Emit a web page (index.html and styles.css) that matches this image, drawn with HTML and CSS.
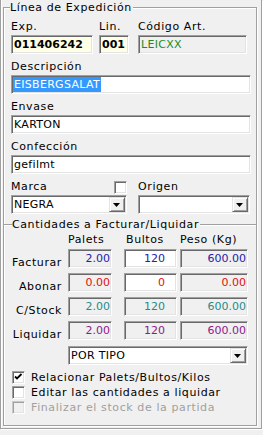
FILE: index.html
```html
<!DOCTYPE html>
<html>
<head>
<meta charset="utf-8">
<link rel="stylesheet" href="styles.css">
</head>
<body>
<div class="panel">
  <fieldset class="grp main">
    <legend>Línea de Expedición</legend>
    <div class="row r1">
      <div class="fld">
        <div class="lbl">Exp.</div>
        <div class="box sunk yellow bold">011406242</div>
      </div>
      <div class="fld">
        <div class="lbl">Lin.</div>
        <div class="box sunk yellow bold">001</div>
      </div>
      <div class="fld">
        <div class="lbl">Código Art.</div>
        <div class="box sunk dis green">LEICXX</div>
      </div>
    </div>
    <div class="fld gap">
      <div class="lbl">Descripción</div>
      <div class="box sunk flexbox"><span class="sel">EISBERGSALAT</span></div>
    </div>
    <div class="fld gap">
      <div class="lbl">Envase</div>
      <div class="box sunk">KARTON</div>
    </div>
    <div class="fld gap">
      <div class="lbl">Confección</div>
      <div class="box sunk">gefilmt</div>
    </div>
    <div class="row r-marca gap">
      <div class="fld">
        <div class="lbl lbl-chk"><span>Marca</span><span class="chk sunk"></span></div>
        <div class="combo sunk"><span class="val">NEGRA</span><span class="btn"><svg width="7" height="4" viewBox="0 0 7 4"><polygon points="0,0 7,0 3.5,4" fill="#000"/></svg></span></div>
      </div>
      <div class="fld">
        <div class="lbl">Origen</div>
        <div class="combo sunk"><span class="val"></span><span class="btn"><svg width="7" height="4" viewBox="0 0 7 4"><polygon points="0,0 7,0 3.5,4" fill="#000"/></svg></span></div>
      </div>
    </div>

    <fieldset class="grp sub">
      <legend>Cantidades a Facturar/Liquidar</legend>
      <div class="qty qhead">
        <div></div>
        <div class="hd">Palets</div>
        <div class="hd hd-b">Bultos</div>
        <div class="hd">Peso (Kg)</div>
      </div>
      <div class="qty qbody">
        <div class="rl">Facturar</div>
        <div class="box sunk dis num w-p c-blue">2.00</div>
        <div class="box sunk num w-b c-blue">120</div>
        <div class="box sunk dis num w-k c-blue">600.00</div>

        <div class="rl">Abonar</div>
        <div class="box sunk dis num w-p c-red">0.00</div>
        <div class="box sunk num w-b c-red">0</div>
        <div class="box sunk dis num w-k c-red">0.00</div>

        <div class="rl">C/Stock</div>
        <div class="box sunk dis num w-p c-teal">2.00</div>
        <div class="box sunk dis num w-b c-teal">120</div>
        <div class="box sunk dis num w-k c-teal">600.00</div>

        <div class="rl">Liquidar</div>
        <div class="box sunk dis num w-p c-purple">2.00</div>
        <div class="box sunk dis num w-b c-purple">120</div>
        <div class="box sunk dis num w-k c-purple">600.00</div>

        <div></div>
        <div class="combo sunk tipo"><span class="val">POR TIPO</span><span class="btn"><svg width="7" height="4" viewBox="0 0 7 4"><polygon points="0,0 7,0 3.5,4" fill="#000"/></svg></span></div>
      </div>
      <div class="checks">
        <div class="ck first"><span class="chk sunk"><svg width="9" height="9" viewBox="0 0 9 9"><polyline points="1,3.5 3,5.5 7.5,1" fill="none" stroke="#000" stroke-width="1.8"/></svg></span>Relacionar Palets/Bultos/Kilos</div>
        <div class="ck"><span class="chk sunk"></span>Editar las cantidades a liquidar</div>
        <div class="ck off"><span class="chk sunk off"></span>Finalizar el stock de la partida</div>
      </div>
    </fieldset>
  </fieldset>
</div>
</body>
</html>
```

FILE: styles.css
```css
* { box-sizing: border-box; }
html, body { margin: 0; padding: 0; }
body {
  width: 263px;
  height: 435px;
  overflow: hidden;
  background: #f0f0f0;
  font-family: "DejaVu Sans", Verdana, sans-serif;
  font-size: 11px;
  letter-spacing: 0.6px;
  color: #000;
}

.panel {
  width: 262px;
  height: 429px;
  border: 1px solid #a0a0a0;
  border-top: 0;
  box-shadow: inset 1px 0 0 #fff, 1px 1px 0 #fff;
  padding-left: 2px;
}

/* etched group frames */
.grp { margin: 0; min-width: 0; }
.grp legend {
  line-height: 15px;
  height: 15px;
  background: #f0f0f0;
  padding: 0 1px 0 0;
}
.main {
  width: 254px;
  height: 426px;
  border: 1px solid #a0a0a0;
  box-shadow: inset 1px 1px 0 #fff, 1px 1px 0 #fff;
  padding: 5px 5px 0 7px;
}
.main > legend { margin-left: -1px; }

.sub {
  margin: 3px -5px 0 -7px;
  border: 0;
  border-top: 1px solid #a0a0a0;
  box-shadow: inset 0 1px 0 #fff;
  padding: 0;
}
.sub > legend { margin-left: 8px; }

/* 3D sunken edit border */
.sunk {
  border: 1px solid;
  border-color: #a0a0a0 #fff #fff #a0a0a0;
  box-shadow: inset 1px 1px 0 #696969, inset -1px -1px 0 #e3e3e3;
}

.row { display: grid; }
.r1 { grid-template-columns: 82px 30px 112px; column-gap: 6px; }
.r1 > .fld:nth-child(3) { margin-left: 3px; }
.r-marca { grid-template-columns: 116px 112px; column-gap: 11px; }
.gap { margin-top: 6px; }

.lbl { line-height: 14px; height: 14px; margin-bottom: 1px; white-space: nowrap; }
.lbl-chk { display: flex; justify-content: space-between; align-items: flex-start; }
.lbl-chk .chk { margin-top: 1px; }

.box {
  height: 19px;
  line-height: 17px;
  padding: 0 2px;
  background: #fff;
  white-space: nowrap;
  overflow: hidden;
  letter-spacing: 0.3px;
}
.flexbox { display: flex; align-items: center; padding-left: 1px; }
.sel {
  display: inline-block;
  line-height: 15px;
  padding: 0 1px;
  background: #3399ff;
  color: #fff;
}
.yellow { background: #ffffe6; }
.bold { font-weight: bold; letter-spacing: 0; }
.dis { background: #f0f0f0; }
.green { color: #1f8a1f; }

.combo {
  height: 19px;
  display: flex;
  align-items: stretch;
  background: #fff;
  padding: 1px;
}
.r-marca .combo { margin-top: 1px; }
.combo .val { flex: 1; line-height: 15px; padding-left: 1px; white-space: nowrap; letter-spacing: 0.3px; }
.combo .btn {
  width: 16px;
  background: #f0f0f0;
  border: 1px solid;
  border-color: #e3e3e3 #696969 #696969 #e3e3e3;
  box-shadow: inset 1px 1px 0 #fff, inset -1px -1px 0 #a0a0a0;
  display: flex;
  align-items: center;
  justify-content: center;
}
.combo .btn svg { display: block; margin-left: -1px; }

.chk {
  width: 13px;
  height: 13px;
  background: #fff;
  display: inline-flex;
  align-items: center;
  justify-content: center;
  flex: none;
}
.chk svg { display: block; }
.chk.off { background: #f0f0f0; }

/* quantities */
.qty { display: grid; grid-template-columns: 64px 56px 56px 68px; }
.qhead { margin-top: 1px; margin-bottom: 2px; line-height: 14px; height: 14px; }
.hd-b { padding-left: 2px; }
.qbody { grid-auto-rows: 19px; row-gap: 5px; }
.rl {
  text-align: right;
  padding-right: 6px;
  padding-top: 7px;
  line-height: 14px;
  white-space: nowrap;
}
.num { text-align: right; padding: 0 1px 0 2px; letter-spacing: 0; }
.w-p { width: 44px; }
.w-b { width: 53px; padding-right: 11px; }
.w-k { width: 68px; }
.c-blue { color: #2222a8; }
.c-red { color: #e01010; }
.c-teal { color: #1f8c8c; }
.c-purple { color: #8e1a8e; }

.tipo { grid-column: 2 / 5; margin-top: 1px; }
.tipo .val { padding-left: 1px; }

.checks { margin-top: 5px; padding-left: 8px; }
.ck { display: flex; align-items: center; height: 15px; line-height: 15px; white-space: nowrap; }
.ck.first { height: 16px; }
.ck .chk { margin-right: 6px; }
.ck.off { color: #a0a0a0; }
.chk.off { border-color: #c8c8c8 #fff #fff #c8c8c8; box-shadow: inset 1px 1px 0 #a0a0a0, inset -1px -1px 0 #e3e3e3; }
```
